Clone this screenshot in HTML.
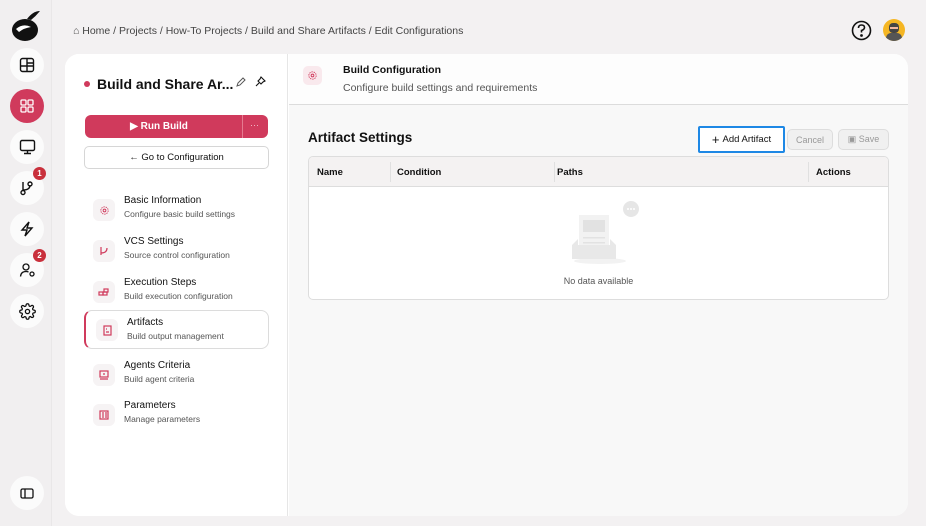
<!DOCTYPE html>
<html><head><meta charset="utf-8"><style>
*{box-sizing:border-box;margin:0;padding:0}
body{width:926px;height:526px;background:#f3f1f2;font-family:"Liberation Sans",sans-serif;position:relative;overflow:hidden;color:#111}
.rail{position:absolute;left:0;top:0;width:52px;height:526px;background:#f1eff0;border-right:1px solid #e9e7e8}
.rb{position:absolute;left:10px;width:34px;height:34px;border-radius:50%;background:#fbfbfb;display:flex;align-items:center;justify-content:center}
.badge{position:absolute;right:-2px;top:-4px;width:13px;height:13px;border-radius:50%;background:#c9303c;color:#fff;font-size:8px;font-weight:bold;display:flex;align-items:center;justify-content:center}
.crumb{position:absolute;left:73px;top:25px;font-size:10.5px;color:#444}
.card{position:absolute;left:65px;top:54px;width:843px;height:462px;background:#fff;border-radius:14px;overflow:hidden}
.left{position:absolute;left:0;top:0;width:223px;height:462px;border-right:1px solid #e6e6e6;background:#fff}
.right{position:absolute;left:224px;top:0;right:0;height:462px;background:#f8f8f8}
.item{position:absolute;left:19px;width:185px;height:38px}
.item .ic{position:absolute;left:9px;top:7px;width:22px;height:22px;border-radius:6px;background:#f6f3f4;display:flex;align-items:center;justify-content:center}
.item .t{position:absolute;left:40px;top:3px;font-size:10px;color:#111}
.item .s{position:absolute;left:40px;top:17px;font-size:8.5px;color:#555}
.btn{position:absolute;height:22px;border-radius:5px;font-size:9px;display:flex;align-items:center;justify-content:center}
</style></head><body>
<div class="rail">
 <svg style="position:absolute;left:11px;top:8px" width="30" height="34" viewBox="0 0 30 34"><ellipse cx="14" cy="22" rx="13" ry="11" fill="#111"/><path d="M16 11 Q22 3 29 3 Q25 8 20 12Z" fill="#111"/><path d="M5 21 Q12 15 20 19 Q13 20 8 24Z" fill="#fff"/></svg>
 <div class="rb" style="top:48px"><svg width="16" height="16" viewBox="0 0 16 16" fill="none" stroke="#111" stroke-width="1.4"><rect x="1.5" y="1.5" width="13" height="13" rx="2"/><path d="M1.5 9h13M8 1.5v13M8 6h6.5"/></svg></div>
 <div class="rb" style="top:89px;background:#d03a5c"><svg width="16" height="16" viewBox="0 0 16 16" fill="none" stroke="#fff" stroke-width="1.3"><rect x="2" y="2" width="5" height="5" rx="1"/><rect x="9" y="2" width="5" height="5" rx="1"/><rect x="2" y="9" width="5" height="5" rx="1"/><rect x="9" y="9" width="5" height="5" rx="1"/></svg></div>
 <div class="rb" style="top:130px"><svg width="17" height="16" viewBox="0 0 17 16" fill="none" stroke="#111" stroke-width="1.4"><rect x="1.5" y="1.5" width="14" height="10" rx="1.5"/><path d="M8.5 11.5v3M5 14.5h7"/></svg></div>
 <div class="rb" style="top:171px"><svg width="16" height="16" viewBox="0 0 16 16" fill="none" stroke="#111" stroke-width="1.4"><circle cx="4" cy="12.5" r="2"/><path d="M4 10.5V2M4 10 Q11 10 11 5"/><circle cx="11" cy="4" r="2"/></svg><div class="badge">1</div></div>
 <div class="rb" style="top:212px"><svg width="16" height="16" viewBox="0 0 16 16" fill="none" stroke="#111" stroke-width="1.4"><path d="M10 1 L3 9 H8 L6 15 L13 7 H8 Z"/></svg></div>
 <div class="rb" style="top:253px"><svg width="17" height="16" viewBox="0 0 17 16" fill="none" stroke="#111" stroke-width="1.3"><circle cx="7" cy="5" r="3"/><path d="M1.5 14.5 Q2 9.5 7 9.5 Q8.5 9.5 9.5 10"/><circle cx="13" cy="12" r="2"/></svg><div class="badge">2</div></div>
 <div class="rb" style="top:294px"><svg width="17" height="17" viewBox="0 0 24 24" fill="none" stroke="#111" stroke-width="1.8"><circle cx="12" cy="12" r="3"/><path d="M19.4 15a1.7 1.7 0 0 0 .3 1.8l.1.1a2 2 0 1 1-2.8 2.8l-.1-.1a1.7 1.7 0 0 0-1.8-.3 1.7 1.7 0 0 0-1 1.5V21a2 2 0 1 1-4 0v-.1a1.7 1.7 0 0 0-1.100-1.5 1.7 1.7 0 0 0-1.8.3l-.1.1a2 2 0 1 1-2.8-2.8l.1-.1a1.7 1.7 0 0 0 .3-1.8 1.7 1.7 0 0 0-1.5-1H3a2 2 0 1 1 0-4h.1a1.7 1.7 0 0 0 1.5-1.100 1.7 1.7 0 0 0-.3-1.8l-.1-.1a2 2 0 1 1 2.8-2.8l.1.1a1.7 1.7 0 0 0 1.8.3H9a1.7 1.7 0 0 0 1-1.5V3a2 2 0 1 1 4 0v.1a1.7 1.7 0 0 0 1 1.5 1.7 1.7 0 0 0 1.8-.3l.1-.1a2 2 0 1 1 2.8 2.8l-.1.1a1.7 1.7 0 0 0-.3 1.8V9a1.7 1.7 0 0 0 1.5 1H21a2 2 0 1 1 0 4h-.1a1.7 1.7 0 0 0-1.5 1z"/></svg></div>
 <div class="rb" style="top:476px"><svg width="14" height="11" viewBox="0 0 14 11" fill="none" stroke="#111" stroke-width="1.3"><rect x="1" y="1" width="12" height="9" rx="1.5"/><path d="M5 1v9"/></svg></div>
</div>
<div class="crumb">⌂ Home / Projects / How-To Projects / Build and Share Artifacts / Edit Configurations</div>
<svg style="position:absolute;left:851px;top:20px" width="21" height="21" viewBox="0 0 21 21" fill="none" stroke="#111" stroke-width="1.6"><circle cx="10.5" cy="10.5" r="9"/><path d="M7.5 8 Q7.5 5 10.5 5 Q13.5 5 13.5 7.5 Q13.5 9.5 10.5 10.5 V12.5"/><circle cx="10.5" cy="15.5" r=".6" fill="#111"/></svg>
<div style="position:absolute;left:883px;top:19px;width:22px;height:22px;border-radius:50%;background:#f5b623;overflow:hidden"><div style="position:absolute;left:6px;top:4px;width:10px;height:10px;border-radius:4px;background:#444"></div><div style="position:absolute;left:7px;top:8px;width:8px;height:2px;background:#f1b7a0"></div><div style="position:absolute;left:3px;top:14px;width:16px;height:10px;border-radius:6px;background:#555"></div></div>
<div class="card">
 <div class="left">
  <div style="position:absolute;left:19px;top:27px;width:6px;height:6px;border-radius:50%;background:#d03a5c"></div>
  <div style="position:absolute;left:32px;top:22px;font-size:14px;font-weight:bold">Build and Share Ar...</div>
  <svg style="position:absolute;left:171px;top:23px" width="10" height="10" viewBox="0 0 10 10" fill="none" stroke="#555" stroke-width="1"><path d="M1 9 L2 6 L7 1 L9 3 L4 8 Z"/></svg>
  <svg style="position:absolute;left:190px;top:22px" width="11" height="11" viewBox="0 0 11 11" fill="none" stroke="#111" stroke-width="1.1"><path d="M6 1 L10 5 L8 6 L6 8 L5 7 L3 5 L5 3 Z M4 7 L1 10"/></svg>
  <div class="btn" style="left:20px;top:61px;width:183px;height:23px;background:#d03a5c;color:#fff;font-weight:bold;font-size:10px;border-radius:6px"><span style="margin-right:35px">▶ Run Build</span></div>
  <div style="position:absolute;left:177px;top:61px;width:1px;height:23px;background:#e57a90"></div>
  <div style="position:absolute;left:185px;top:66px;color:#f5c5d0;font-size:9px">···</div>
  <div class="btn" style="left:19px;top:92px;width:185px;height:23px;border:1px solid #d6d6d6;font-size:9.5px">← Go to Configuration</div>
  <div class="item" style="top:138px"><div class="ic"><svg width="11" height="11" viewBox="0 0 24 24" fill="none" stroke="#d03a5c" stroke-width="2"><circle cx="12" cy="12" r="3"/><circle cx="12" cy="12" r="8" stroke-dasharray="3 2"/></svg></div><div class="t">Basic Information</div><div class="s">Configure basic build settings</div></div>
  <div class="item" style="top:179px"><div class="ic"><svg width="10" height="10" viewBox="0 0 10 10" fill="none" stroke="#d03a5c" stroke-width="1.2"><path d="M2 1v8M2 7 Q8 7 8 2"/></svg></div><div class="t">VCS Settings</div><div class="s">Source control configuration</div></div>
  <div class="item" style="top:220px"><div class="ic"><svg width="12" height="10" viewBox="0 0 12 10" fill="none" stroke="#d03a5c" stroke-width="1.2"><rect x="1" y="5" width="4" height="3"/><rect x="5" y="5" width="4" height="3"/><rect x="6" y="2" width="4" height="3"/></svg></div><div class="t">Execution Steps</div><div class="s">Build execution configuration</div></div>
  <div class="item" style="top:256px;left:19px;width:185px;height:39px;border:1px solid #dcdcdc;border-left:2px solid #d03a5c;border-radius:8px"><div class="ic" style="top:8px;left:10px"><svg width="9" height="11" viewBox="0 0 9 11" fill="none" stroke="#d03a5c" stroke-width="1.2"><rect x="1" y="1" width="7" height="9"/><path d="M3 4h1M3 7h3"/></svg></div><div class="t" style="left:41px;top:6px">Artifacts</div><div class="s" style="left:41px;top:20px">Build output management</div></div>
  <div class="item" style="top:303px"><div class="ic"><svg width="10" height="10" viewBox="0 0 10 10" fill="none" stroke="#d03a5c" stroke-width="1.2"><rect x="1" y="1" width="8" height="6"/><path d="M1 9h8M4 4h2"/></svg></div><div class="t">Agents Criteria</div><div class="s">Build agent criteria</div></div>
  <div class="item" style="top:343px"><div class="ic"><svg width="10" height="10" viewBox="0 0 10 10" fill="none" stroke="#d03a5c" stroke-width="1.2"><rect x="1" y="1" width="8" height="8"/><path d="M4 2v6M7 2v6"/></svg></div><div class="t">Parameters</div><div class="s">Manage parameters</div></div>
 </div>
 <div class="right">
  <div style="position:absolute;left:0;top:0;right:0;height:51px;background:#fdfdfd;border-bottom:1px solid #dcdcdc"></div>
  <div style="position:absolute;left:14px;top:12px;width:19px;height:19px;border-radius:5px;background:#f9e9ed;display:flex;align-items:center;justify-content:center"><svg width="11" height="11" viewBox="0 0 24 24" fill="none" stroke="#d03a5c" stroke-width="2"><circle cx="12" cy="12" r="3"/><circle cx="12" cy="12" r="8" stroke-dasharray="3 2"/></svg></div>
  <div style="position:absolute;left:54px;top:10px;font-size:10.5px;font-weight:bold">Build Configuration</div>
  <div style="position:absolute;left:54px;top:28px;font-size:10.5px;color:#555">Configure build settings and requirements</div>
  <div style="position:absolute;left:19px;top:76px;font-size:13.5px;font-weight:bold">Artifact Settings</div>
  <div class="btn" style="left:409px;top:72px;width:87px;height:27px;border:2px solid #1e88e5;border-radius:2px;background:#fff;font-size:9.5px"><span style="font-size:13px;margin-right:3px">+</span>Add Artifact</div>
  <div class="btn" style="left:498px;top:75px;width:46px;height:21px;border:1px solid #ddd;background:#f0f0f0;color:#999">Cancel</div>
  <div class="btn" style="left:549px;top:75px;width:51px;height:21px;border:1px solid #ddd;background:#f0f0f0;color:#999">▣ Save</div>
  <div style="position:absolute;left:19px;top:102px;width:581px;height:144px;border:1px solid #ddd;border-radius:5px;background:#fff;overflow:hidden">
   <div style="height:30px;background:#f4f2f2;border-bottom:1px solid #ddd;position:relative;font-size:9.5px;font-weight:bold">
    <span style="position:absolute;left:8px;top:10px">Name</span><span style="position:absolute;left:88px;top:10px">Condition</span><span style="position:absolute;left:248px;top:10px">Paths</span><span style="position:absolute;left:507px;top:10px">Actions</span>
    <div style="position:absolute;left:81px;top:5px;width:1px;height:20px;background:#e0e0e0"></div><div style="position:absolute;left:245px;top:5px;width:1px;height:20px;background:#e0e0e0"></div><div style="position:absolute;left:499px;top:5px;width:1px;height:20px;background:#e0e0e0"></div>
   </div>
   <svg style="position:absolute;left:260px;top:44px" width="80" height="70" viewBox="0 0 80 70"><ellipse cx="31" cy="60" rx="26" ry="3" fill="#f2f2f2"/><circle cx="62" cy="8" r="8" fill="#e6e6e6"/><circle cx="59" cy="8" r="1" fill="#fff"/><circle cx="62" cy="8" r="1" fill="#fff"/><circle cx="65" cy="8" r="1" fill="#fff"/><rect x="10" y="14" width="30" height="36" fill="#f2f2f2"/><rect x="14" y="19" width="22" height="12" fill="#e2e2e2"/><rect x="14" y="36" width="22" height="1.5" fill="#e2e2e2"/><rect x="14" y="41" width="22" height="1.5" fill="#e2e2e2"/><path d="M3 44 L9 38 V44 H41 V38 L47 44 V58 H3 Z" fill="#e8e8e8"/></svg>
   <div style="position:absolute;left:0;right:0;top:119px;text-align:center;font-size:9px;color:#555">No data available</div>
  </div>
 </div>
</div>
</body></html>
